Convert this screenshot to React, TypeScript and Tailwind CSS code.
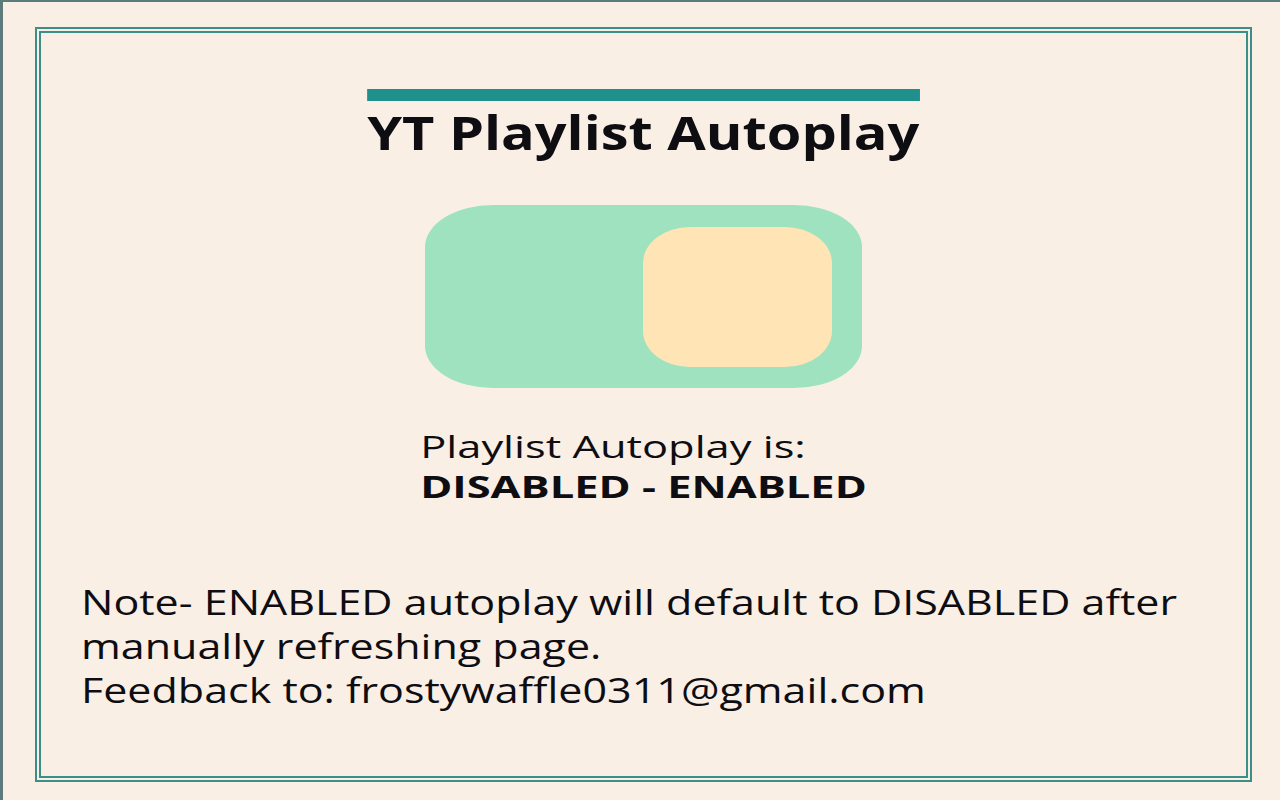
import React from "react";

export default function App() {
  return (
    <div
      className="w-[1280px] h-[800px] bg-[#faefe5] border-t-2 border-l-[3px] border-[#5b7c7b] pl-[32px] pt-[25px] overflow-hidden"
      style={{ fontFamily: '"Open Sans", "Noto Sans", sans-serif' }}
    >
      <div className="w-[1217px] h-[755px] border-[6px] border-double border-[#3a8f88] flex flex-col items-center text-[#0d0d12]">
        <h1 className="mt-[56px] border-t-[12px] border-[#20908c] pt-[8px] text-[46px] leading-[46px] font-bold scale-x-[1.215] origin-center">
          YT Playlist Autoplay
        </h1>
        <div className="mt-[50px] w-[437px] h-[183px] rounded-[68px_/_42px] bg-[#9fe2bf] flex items-center justify-end pr-[30px]">
          <div className="w-[189px] h-[140px] rounded-[47px_/_36px] bg-[#ffe4b5]" />
        </div>
        <div className="mt-[38px] text-[31px] leading-[40px] scale-x-[1.4] origin-center">
          <div>Playlist Autoplay is:</div>
          <div className="font-bold">DISABLED - ENABLED</div>
        </div>
        <div className="self-stretch mt-[74px] pl-[40px] text-[34px] leading-[44px]">
          <div className="scale-x-[1.265] origin-left">
            <div className="whitespace-nowrap">Note- ENABLED autoplay will default to DISABLED after</div>
            <div className="whitespace-nowrap">manually refreshing page.</div>
            <div className="whitespace-nowrap">Feedback to: frostywaffle0311@gmail.com</div>
          </div>
        </div>
      </div>
    </div>
  );
}
